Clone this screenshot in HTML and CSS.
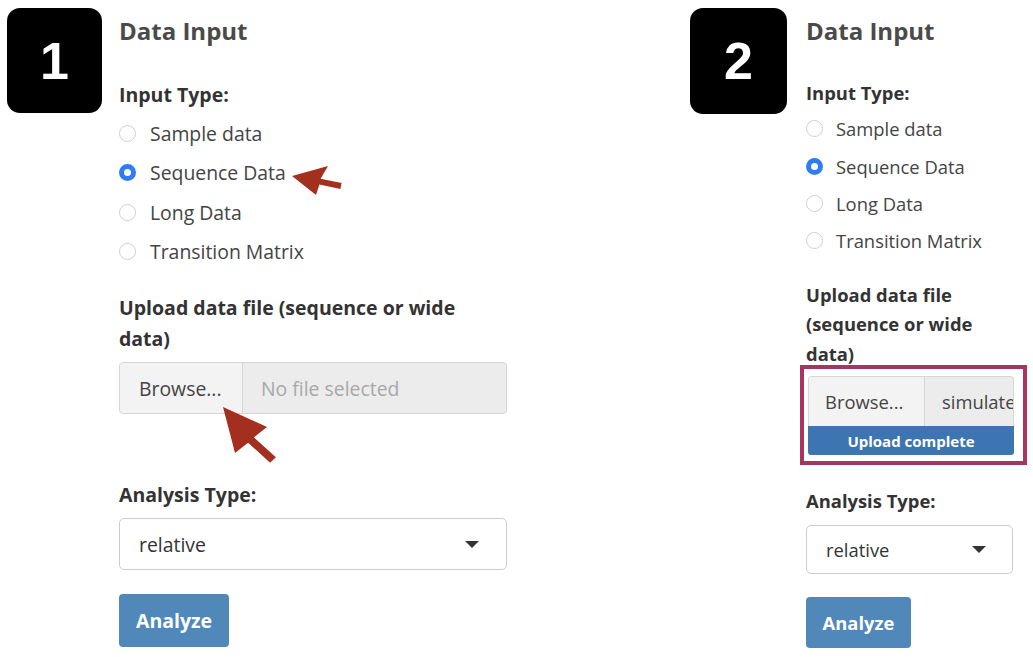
FILE: index.html
```html
<!DOCTYPE html>
<html>
<head>
<meta charset="utf-8">
<link rel="stylesheet" href="styles.css">
</head>
<body>
<div class="page">
  <section class="panel p1">
    <div class="badge">1</div>
    <div class="form">
      <h2 class="title">Data Input</h2>
      <div class="label lbl-type">Input Type:</div>
      <div class="radios">
        <div class="radio"><span class="dot"></span><span>Sample data</span></div>
        <div class="radio"><span class="dot on"></span><span>Sequence Data</span></div>
        <div class="radio"><span class="dot"></span><span>Long Data</span></div>
        <div class="radio"><span class="dot"></span><span>Transition Matrix</span></div>
      </div>
      <div class="label lbl-upload">Upload data file (sequence or wide data)</div>
      <div class="file">
        <div class="browse">Browse...</div>
        <div class="fname placeholder">No file selected</div>
      </div>
      <div class="label lbl-analysis">Analysis Type:</div>
      <div class="select"><span>relative</span><span class="caret"></span></div>
      <div class="btn">Analyze</div>
    </div>
  </section>
  <section class="panel p2">
    <div class="badge">2</div>
    <div class="form">
      <h2 class="title">Data Input</h2>
      <div class="label lbl-type">Input Type:</div>
      <div class="radios">
        <div class="radio"><span class="dot"></span><span>Sample data</span></div>
        <div class="radio"><span class="dot on"></span><span>Sequence Data</span></div>
        <div class="radio"><span class="dot"></span><span>Long Data</span></div>
        <div class="radio"><span class="dot"></span><span>Transition Matrix</span></div>
      </div>
      <div class="label lbl-upload">Upload data file (sequence or wide data)</div>
      <div class="highlight">
        <div class="file">
          <div class="browse">Browse...</div>
          <div class="fname">simulated_sequences.csv</div>
        </div>
        <div class="progress">Upload complete</div>
      </div>
      <div class="label lbl-analysis">Analysis Type:</div>
      <div class="select"><span>relative</span><span class="caret"></span></div>
      <div class="btn">Analyze</div>
    </div>
  </section>
  <svg class="arrows" width="1033" height="657" viewBox="0 0 1033 657">
    <polygon points="292,176 328,166 320.6,178.8 341.6,183.1 340.4,188.9 319.4,184.6 316,195" fill="#a3301f"/>
    <polygon points="223,407 267,427 253.9,437.3 275.9,457.3 270.1,462.7 248.1,442.7 235,453" fill="#a3301f"/>
  </svg>
</div>
</body>
</html>
```

FILE: styles.css
```css
html, body {
  margin: 0;
  padding: 0;
  background: #ffffff;
}
.page {
  position: relative;
  width: 1033px;
  height: 657px;
  display: flex;
  font-family: "Open Sans", "Liberation Sans", sans-serif;
  color: #444;
  overflow: hidden;
}
.panel {
  display: flex;
  align-items: flex-start;
}
.p1 {
  padding-left: 7px;
  width: 500px;
}
.p2 {
  margin-left: 183px;
}
.badge {
  background: #000;
  color: #fff;
  font-family: "Liberation Sans", Arial, sans-serif;
  font-weight: bold;
  font-size: 52px;
  border-radius: 13px;
  display: flex;
  align-items: center;
  justify-content: center;
  margin-top: 8px;
}
.p1 .badge { width: 95px; height: 105px; }
.p2 .badge { width: 97px; height: 106px; }
.p1 .form { margin-left: 17px; width: 388px; }
.p2 .form { margin-left: 19px; width: 208px; }

.title {
  margin: 11px 0 0;
  font-size: 24px;
  line-height: 40px;
  font-weight: 700;
  color: #4a4a4a;
}
.label {
  font-weight: 700;
  color: #333;
}
.p1 .label { font-size: 19.5px; line-height: 30px; }
.p2 .label { font-size: 18.4px; line-height: 28px; }
.p1 .lbl-type { margin-top: 29px; }
.p2 .lbl-type { margin-top: 28px; }

.radio {
  display: flex;
  align-items: center;
}
.p1 .radio { height: 39.5px; font-size: 19.4px; gap: 14px; }
.p2 .radio { height: 37.33px; font-size: 18.4px; gap: 13px; }
.p1 .radios { margin-top: 3.5px; }
.p2 .radios { margin-top: 3.3px; }
.dot {
  box-sizing: border-box;
  width: 17px;
  height: 17px;
  border-radius: 50%;
  border: 1px solid #cfcfcf;
  background: #fff;
  flex: none;
}
.dot.on {
  border: 5px solid #2f7cf5;
  background: #fff;
}

.p1 .lbl-upload { margin-top: 20px; line-height: 31px; max-width: 370px; }
.p2 .lbl-upload { margin-top: 20px; line-height: 29.5px; max-width: 180px; }

.file {
  display: flex;
  box-sizing: border-box;
  border: 1px solid #d6d6d6;
  border-radius: 4px;
  overflow: hidden;
  background: #ececec;
}
.p1 .file { margin-top: 8.5px; height: 52px; font-size: 19.4px; }
.p2 .file { height: 50px; font-size: 18.4px; border-bottom: none; border-radius: 4px 4px 0 0; }
.browse {
  background: #f3f3f3;
  border-right: 1px solid #d6d6d6;
  display: flex;
  align-items: center;
  color: #444;
  flex: none;
}
.p1 .browse { width: 123px; padding-left: 19px; box-sizing: border-box; }
.p2 .browse { width: 116px; padding-left: 16px; box-sizing: border-box; }
.fname {
  display: flex;
  align-items: center;
  white-space: nowrap;
  overflow: hidden;
  color: #444;
  min-width: 0;
}
.p1 .fname { padding-left: 18px; }
.p2 .fname { padding-left: 17px; }
.fname.placeholder { color: #a8a8a8; }

.highlight {
  margin-top: -3px;
  margin-left: -6px;
  border: 4px solid #a8355f;
  padding: 7px 9px 6px 4px;
  width: 206px;
}
.progress {
  height: 29px;
  background: #3d74b2;
  color: #fff;
  font-size: 15px;
  font-weight: 700;
  display: flex;
  align-items: center;
  justify-content: center;
  border-radius: 0 0 3px 3px;
}

.p1 .lbl-analysis { margin-top: 66px; }
.p2 .lbl-analysis { margin-top: 22px; }

.select {
  box-sizing: border-box;
  border: 1px solid #cccccc;
  border-radius: 5px;
  display: flex;
  align-items: center;
  justify-content: space-between;
  color: #333;
}
.p1 .select { margin-top: 8px; height: 52px; padding: 0 27px 0 19px; font-size: 19.4px; }
.p2 .select { margin-top: 10px; height: 49px; padding: 0 26px 0 19px; font-size: 18.4px; width: 207px; }
.caret {
  width: 0;
  height: 0;
  border-left: 7px solid transparent;
  border-right: 7px solid transparent;
  border-top: 7px solid #333;
}

.btn {
  box-sizing: border-box;
  background: #4f88b9;
  color: #fff;
  font-weight: 700;
  border-radius: 4px;
  display: flex;
  align-items: center;
  justify-content: center;
}
.p1 .btn { margin-top: 24px; width: 110px; height: 53px; font-size: 19.5px; }
.p2 .btn { margin-top: 23px; width: 105px; height: 51px; font-size: 18.4px; }

.arrows {
  position: absolute;
  left: 0;
  top: 0;
  pointer-events: none;
}
```
